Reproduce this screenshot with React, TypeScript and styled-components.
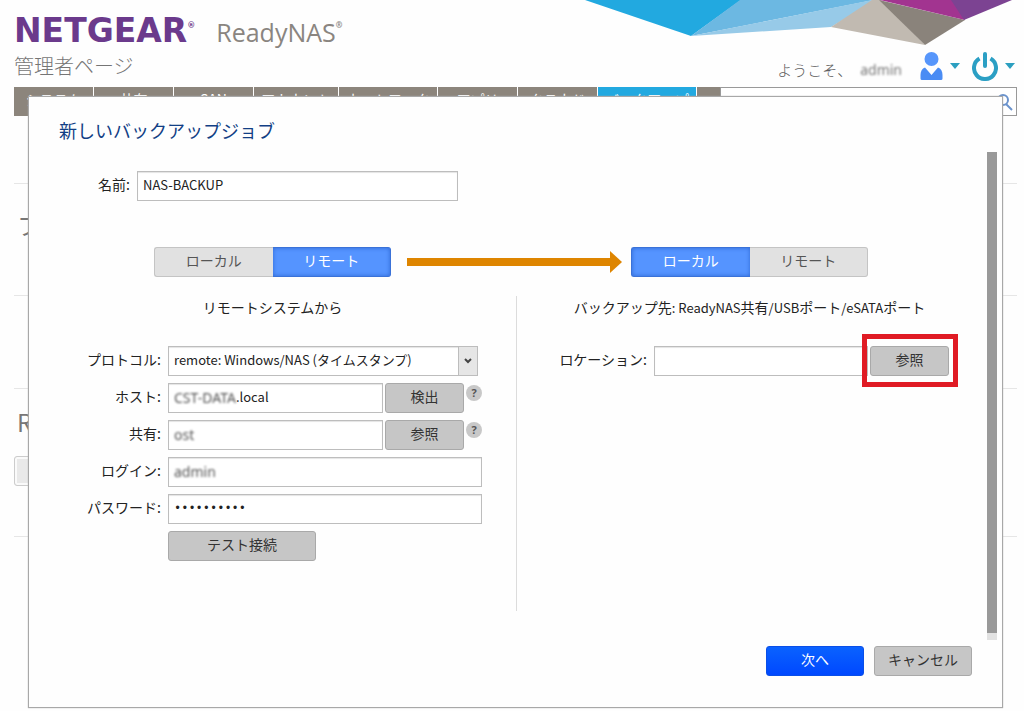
import React from "react";
import styled, { createGlobalStyle, css } from "styled-components";

const GlobalStyle = createGlobalStyle`
  *, *::before, *::after { box-sizing: border-box; }
  body {
    margin: 0;
    background: #fefefe;
    color: #222;
    font-family: "Noto Sans CJK JP", "Noto Sans", sans-serif;
    font-size: 14px;
    line-height: 20px;
  }
  button, input, select { font: inherit; color: inherit; margin: 0; }
  h1, h2, h3, p { margin: 0; font-weight: 400; }
`;

/* The admin page and the dialog share one grid cell, so the dialog covers the page. */
const Stage = styled.div`
  display: grid;
  grid-template-columns: minmax(0, 1fr);
  align-items: start;
  > * { grid-area: 1 / 1; }
`;

const Page = styled.div`
  position: relative;
  padding: 0 7px 0 14px;
`;

const Facets = styled.svg`
  position: absolute;
  top: 0;
  right: 0;
  width: 439px;
  height: 46px;
`;

const Header = styled.header`
  display: flex;
  justify-content: space-between;
  height: 87px;
  padding-top: 12px;
`;

const Brand = styled.div`
  display: flex;
  align-items: baseline;
  gap: 21px;
  height: 42px;
  line-height: 38px;
`;

const Logo = styled.span`
  color: #6b3a8c;
  font-family: "DejaVu Sans", sans-serif;
  font-weight: 700;
  font-size: 33px;
`;

const Product = styled.span`
  color: #8a8580;
  font-family: "Open Sans", sans-serif;
  font-size: 25px;
`;

const Reg = styled.sup`
  font-size: 8px;
  font-weight: 700;
  line-height: 1;
  vertical-align: 14px;
`;

const Subtitle = styled.p`
  color: #757575;
  font-size: 20px;
  font-weight: 300;
  line-height: 24px;
`;

const UserArea = styled.div`
  position: relative;
  display: flex;
  align-items: center;
  height: 34px;
  margin-top: 37px;
  padding-right: 2px;
  color: #5c5c5c;
`;

const Welcome = styled.span`
  font-size: 15px;
  font-weight: 300;
  padding-top: 8px;
`;

const Obscured = styled.span`
  padding-bottom: 1px;
  color: #555;
  font-family: "Noto Sans", sans-serif;
  filter: blur(1px);
`;

const HeaderName = styled(Obscured)`
  padding-top: 8px;
  margin: 0 18px 0 8px;
  color: #777;
`;

const IconButton = styled.button`
  display: flex;
  align-items: center;
  gap: 7px;
  padding: 0;
  border: 0;
  background: none;
  & + & { margin-left: 12px; }
`;

const NavRow = styled.div`
  display: flex;
  height: 29px;
`;

const Nav = styled.nav`
  display: flex;
  gap: 1px;
  padding-right: 24px;
  background: #8c857c;
`;

const NavLink = styled.a<{ $active?: boolean }>`
  min-width: 79px;
  padding: 2px 7px 0;
  color: #fff;
  text-align: center;
  text-decoration: none;
  background: ${(p) => (p.$active ? "#22a9e0" : "#8c857c")};
  box-shadow: 1px 0 #fff${(p) => (p.$active ? ", -1px 0 #fff" : "")};
`;

const Search = styled.label`
  display: flex;
  flex: 1;
  align-items: center;
  padding-right: 3px;
  border: 1px solid #999;
  background: #fff;
  input { flex: 1; min-width: 0; border: 0; outline: 0; background: none; }
`;

const Section = styled.section<{ $h: number; $top?: number }>`
  height: ${(p) => p.$h}px;
  padding: ${(p) => p.$top ?? 18}px 3px 0;
  border-bottom: 1px solid #e6e6e6;
  color: #777;
  font-size: 24px;
  line-height: 30px;
`;

const GhostButton = styled.button`
  display: block;
  width: 120px;
  height: 30px;
  margin: 19px -3px 0;
  border: 1px solid #ccc;
  border-radius: 3px;
  background: #e9e9e9;
  box-shadow: inset 0 0 0 2px #fafafa;
`;

const Dialog = styled.div`
  position: relative;
  margin: 96px 21px 4px 28px;
  padding: 19px 5px 31px 0;
  border: 1px solid #a8a8a8;
  background: #fefefe;
  box-shadow: 0 0 1px #aaa;
`;

const Title = styled.h1`
  padding: 0 30px;
  color: #123f85;
  font-size: 18px;
  line-height: 28px;
`;

const Viewport = styled.div`
  display: flex;
  gap: 5px;
  margin-top: 8px;
`;

const Form = styled.form`
  flex: 1;
  padding: 19px 0 29px;
`;

const ScrollTrack = styled.div`
  display: flex;
  width: 10px;
  padding-bottom: 7px;
  background: #e2e2e2;
`;

const ScrollThumb = styled.div`
  flex: 1;
  background: #999;
`;

const Row = styled.div`
  display: flex;
  align-items: center;
  gap: 7px;
  height: 30px;
`;

const Label = styled.label<{ $w?: number }>`
  width: ${(p) => p.$w ?? 130}px;
  flex: none;
  padding-bottom: 4px;
  text-align: right;
`;

const field = css`
  height: 30px;
  border: 1px solid #bdbdbd;
  background: #fff;
  box-shadow: inset 0 1px 1px #e4e4e4;
`;

const Field = styled.div<{ $w?: number }>`
  ${field}
  display: flex;
  align-items: center;
  flex: ${(p) => (p.$w ? `0 1 ${p.$w}px` : "1")};
  min-width: 0;
  padding: 0 5px;
`;

const TextInput = styled.input`
  flex: 1;
  min-width: 0;
  height: 26px;
  padding: 0 0 3px;
  border: 0;
  outline: 0;
  background: none;
  font-size: 13px;
  &[type="password"] {
    padding: 0;
    font-family: "Liberation Mono", monospace;
    font-size: 12px;
  }
`;

const Controls = styled.div`
  display: flex;
  flex: 1;
  gap: 2px;
  min-width: 0;
`;

const SelectWrap = styled.div`
  position: relative;
  flex: 1;
  margin-right: 4px;
`;

const Select = styled.select`
  ${field}
  display: block;
  appearance: none;
  width: 100%;
  padding: 0 24px 2px 5px;
  border-radius: 0;
  outline: 0;
  font-size: 13px;
`;

const SelectArrow = styled.span`
  position: absolute;
  top: 1px;
  right: 1px;
  bottom: 1px;
  display: flex;
  align-items: center;
  justify-content: center;
  width: 19px;
  border-left: 1px solid #bdbdbd;
  background: #e6e6e6;
  pointer-events: none;
`;

const Button = styled.button<{ $w: number; $primary?: boolean }>`
  width: ${(p) => p.$w}px;
  height: 30px;
  flex: none;
  padding: 0 0 4px;
  border: 1px solid ${(p) => (p.$primary ? "#0a4fe8" : "#a9a9a9")};
  border-radius: 3px;
  background: ${(p) => (p.$primary ? "linear-gradient(#0a62ff, #0048ff)" : "#c6c6c6")};
  color: ${(p) => (p.$primary ? "#fff" : "#333")};
`;

const Help = styled.button`
  width: 16px;
  height: 16px;
  margin-top: 2px;
  padding: 0;
  border: 0;
  border-radius: 50%;
  background: #c8c8c8;
  color: #555;
  font: bold 11px/16px "Open Sans", sans-serif;
`;

const Direction = styled.div`
  display: flex;
  align-items: center;
  margin-top: 46px;
  padding: 0 114px 0 125px;
`;

const Toggle = styled.div`
  display: flex;
  flex: none;
  width: 237px;
`;

const ToggleButton = styled.button<{ $on?: boolean }>`
  flex: 1;
  height: 30px;
  padding: 0 0 4px;
  border: 1px solid ${(p) => (p.$on ? "#3a72d8" : "#c4c4c4")};
  background: ${(p) => (p.$on ? "#5594ff" : "#e1e1e1")};
  color: ${(p) => (p.$on ? "#fff" : "#555")};
  box-shadow: ${(p) => (p.$on ? "inset 0 0 4px #2f68d4" : "none")};
  &:first-child { border-radius: 3px 0 0 3px; border-right-width: 0; }
  &:last-child { border-radius: 0 3px 3px 0; border-left-width: 0; }
`;

const Arrow = styled.div`
  display: flex;
  flex: 1;
  align-items: center;
  margin: 0 9px 0 16px;
  &::before { content: ""; flex: 1; height: 8px; background: #de8500; }
  &::after {
    content: "";
    border: solid transparent;
    border-width: 11px 0 11px 12px;
    border-left-color: #de8500;
  }
`;

const Columns = styled.div`
  display: grid;
  grid-template-columns: 488fr 465fr;
  min-height: 315px;
  margin-top: 19px;
`;

const Column = styled.div`
  &:first-child { border-right: 1px solid #dcdcdc; }
`;

const ColumnTitle = styled.h2`
  font-size: 14px;
  line-height: 22px;
  text-align: center;
`;

const Latin = styled.span`
  font-size: 13px;
  line-height: 1;
`;

const Fields = styled.div<{ $left?: boolean }>`
  display: flex;
  flex-direction: column;
  gap: 7px;
  margin-top: 28px;
  padding: ${(p) => (p.$left ? "0 34px 0 2px" : "0 33px 0 0")};
`;

const TestRow = styled(Row)`
  padding-left: 137px;
`;

const Highlighted = styled.div`
  position: relative;
  display: flex;
  &::after {
    content: "";
    position: absolute;
    inset: -12px -9px -11px -8px;
    border: 5px solid #e01b24;
    pointer-events: none;
  }
`;

const Footer = styled.footer`
  display: flex;
  justify-content: flex-end;
  gap: 10px;
  margin-top: 6px;
  padding-right: 25px;
`;

const Caret = () => (
  <svg width="10" height="6" viewBox="0 0 10 6" aria-hidden="true">
    <path d="M0 0h10L5 6z" fill="#2b9fc0" />
  </svg>
);

const tabs = ["システム", "共有", "SAN", "アカウント", "ネットワーク", "アプリ", "クラウド", "バックアップ"];

export default function App() {
  return (
    <Stage>
      <GlobalStyle />
      <Page>
        <Facets viewBox="585 0 439 46" aria-hidden="true">
          <path d="M585 0H741L691 36z" fill="#22a9e0" />
          <path d="M740 0H874L691 36z" fill="#6cb8e2" />
          <path d="M691 36L872 0h4L831 27z" fill="#97cae8" />
          <path d="M872 0h9L925 45 831 27z" fill="#c1bab1" />
          <path d="M879 0L965 20 925 45z" fill="#8a837b" />
          <path d="M880 0h73l12 20z" fill="#a23490" />
          <path d="M951 0h61l-48 20z" fill="#7c4392" />
        </Facets>
        <Header>
          <div>
            <Brand>
              <Logo>NETGEAR<Reg>®</Reg></Logo>
              <Product>ReadyNAS<Reg>®</Reg></Product>
            </Brand>
            <Subtitle>管理者ページ</Subtitle>
          </div>
          <UserArea>
            <Welcome>ようこそ、</Welcome>
            <HeaderName>admin</HeaderName>
            <IconButton aria-label="ユーザー">
              <svg width="23" height="28" viewBox="0 0 23 28" aria-hidden="true">
                <circle cx="11.500" cy="7" r="7" fill="#5796fb" />
                <path d="M5 15.500L11.500 23l6.500-7.500c3 1 4.500 4 4.500 7.500v3.500q0 1.500-1.500 1.500H2Q.5 28 .5 26.500V23c0-3.500 1.500-6.500 4.500-7.500z" fill="#4a8cf4" />
              </svg>
              <Caret />
            </IconButton>
            <IconButton aria-label="電源">
              <svg width="26" height="29" viewBox="0 0 26 29" fill="none" stroke="#2b9fc4" strokeWidth="4" aria-hidden="true">
                <path d="M7.500 6.500A11 11 0 1 0 18.500 6.500" />
                <path d="M13 2v12" strokeLinecap="round" />
              </svg>
              <Caret />
            </IconButton>
          </UserArea>
        </Header>
        <NavRow>
          <Nav>
            {tabs.map((t, i) => (
              <NavLink key={t} href="#" $active={i === 7}>{t}</NavLink>
            ))}
          </Nav>
          <Search>
            <input aria-label="検索" />
            <svg width="16" height="18" viewBox="0 0 16 18" fill="none" stroke="#6a92cc" strokeWidth="2" aria-hidden="true">
              <circle cx="6" cy="7" r="5" />
              <path d="M9 11l6 6" />
            </svg>
          </Search>
        </NavRow>
        <Section $h={68} />
        <Section $h={112} $top={26}>フ</Section>
        <Section $h={93} />
        <Section $h={148}>
          R
          <GhostButton aria-label="ボリューム" />
        </Section>
      </Page>

      <Dialog role="dialog" aria-labelledby="dialog-title">
        <Title id="dialog-title">新しいバックアップジョブ</Title>
        <Viewport>
          <Form id="job" onSubmit={(e) => e.preventDefault()}>
            <Row>
              <Label $w={101} htmlFor="name">名前:</Label>
              <Field $w={321}><TextInput id="name" defaultValue="NAS-BACKUP" /></Field>
            </Row>
            <Direction>
              <Toggle>
                <ToggleButton type="button">ローカル</ToggleButton>
                <ToggleButton type="button" $on>リモート</ToggleButton>
              </Toggle>
              <Arrow />
              <Toggle>
                <ToggleButton type="button" $on>ローカル</ToggleButton>
                <ToggleButton type="button">リモート</ToggleButton>
              </Toggle>
            </Direction>
            <Columns>
              <Column>
                <ColumnTitle>リモートシステムから</ColumnTitle>
                <Fields $left>
                  <Row>
                    <Label htmlFor="protocol">プロトコル:</Label>
                    <SelectWrap>
                      <Select id="protocol">
                        <option>remote: Windows/NAS (タイムスタンプ)</option>
                      </Select>
                      <SelectArrow>
                        <svg width="8" height="6" viewBox="0 0 8 6" fill="none" stroke="#444" strokeWidth="2" aria-hidden="true">
                          <path d="M1 1l3 3 3-3" />
                        </svg>
                      </SelectArrow>
                    </SelectWrap>
                  </Row>
                  <Row>
                    <Label htmlFor="host">ホスト:</Label>
                    <Controls>
                      <Field><Obscured>CST-DATA</Obscured><TextInput id="host" defaultValue=".local" /></Field>
                      <Button type="button" $w={79}>検出</Button>
                      <Help type="button">?</Help>
                    </Controls>
                  </Row>
                  <Row>
                    <Label htmlFor="share">共有:</Label>
                    <Controls>
                      <Field><Obscured>ost</Obscured><TextInput id="share" /></Field>
                      <Button type="button" $w={79}>参照</Button>
                      <Help type="button">?</Help>
                    </Controls>
                  </Row>
                  <Row>
                    <Label htmlFor="login">ログイン:</Label>
                    <Field><Obscured>admin</Obscured><TextInput id="login" /></Field>
                  </Row>
                  <Row>
                    <Label htmlFor="password">パスワード:</Label>
                    <Field><TextInput id="password" type="password" defaultValue="0123456789" /></Field>
                  </Row>
                  <TestRow><Button type="button" $w={148}>テスト接続</Button></TestRow>
                </Fields>
              </Column>
              <Column>
                <ColumnTitle>
                  バックアップ先<Latin>: ReadyNAS</Latin>共有<Latin>/USB</Latin>ポート<Latin>/eSATA</Latin>ポート
                </ColumnTitle>
                <Fields>
                  <Row>
                    <Label htmlFor="location">ロケーション:</Label>
                    <Controls>
                      <Field><TextInput id="location" /></Field>
                      <Highlighted><Button type="button" $w={79}>参照</Button></Highlighted>
                    </Controls>
                  </Row>
                </Fields>
              </Column>
            </Columns>
          </Form>
          <ScrollTrack><ScrollThumb /></ScrollTrack>
        </Viewport>
        <Footer>
          <Button form="job" $w={98} $primary>次へ</Button>
          <Button type="button" $w={98}>キャンセル</Button>
        </Footer>
      </Dialog>
    </Stage>
  );
}
